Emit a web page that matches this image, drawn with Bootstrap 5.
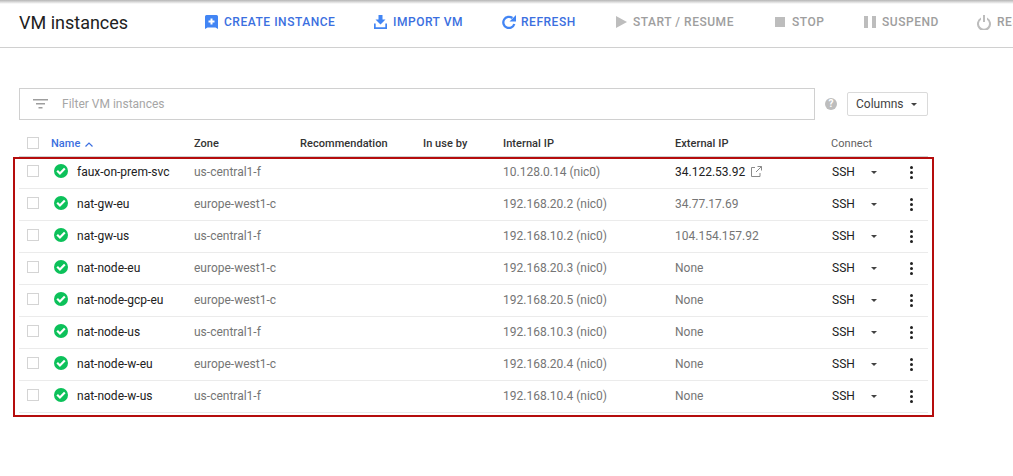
<!DOCTYPE html>
<html lang="en">
<head>
  <meta charset="UTF-8" />
  <title>VM instances</title>
  <link href="https://cdn.jsdelivr.net/npm/bootstrap@5.3.0/dist/css/bootstrap.min.css" rel="stylesheet"/>
  <style>
    html, body { height: 100%; overflow: hidden; }
    body { font-family: Roboto, "Liberation Sans", sans-serif; font-size: 12px; color: #212121; background: #fff; }

    .page-shadow { height: 4px; background: linear-gradient(#b5b5b5, #fff); }

    .vm-toolbar { height: 44px; width: 1013px; border-bottom: 1px solid #d0d0d0; white-space: nowrap; overflow: hidden; padding: 0 0 7px 19px; }
    .vm-title { font-size: 18px; width: 186px; flex: none; }
    .tool-item { font-size: 12px; font-weight: 500; letter-spacing: .53px; flex: none; text-transform: uppercase; color: #3b6fe0; gap: 6px; }
    .tool-item svg { flex: none; fill: #4285f4; }
    .tool-item.off { color: #9e9e9e; }
    .tool-item.off svg { fill: #bdbdbd; }
    .tool-create { width: 169px; }
    .tool-import { width: 128px; }
    .tool-refresh { width: 114px; gap: 5px; }
    .tool-start { width: 159px; }
    .tool-stop { width: 89px; }
    .tool-suspend { width: 113px; }

    .filter-row { padding: 40px 0 0 19px; }
    .filter-box { width: 796px; height: 32px; border: 1px solid #d0d0d0; padding-left: 13px; color: #a6a6a6; gap: 14px; }
    .help-dot { width: 12px; height: 12px; border-radius: 50%; background: #bdbdbd; color: #fff; font-size: 10px; font-weight: 700; line-height: 12px; text-align: center; margin-left: 10px; }
    .columns-btn { width: 81px; height: 24px; margin-left: 10px; border: 1px solid #dadada; border-radius: 2px; background: #fff; color: #424242; font-size: 12px; padding: 0 0 0 8px; gap: 7px; }

    .vm-wrap { width: 909px; margin: 11px 0 0 19px; position: relative; }
    .vm-table { table-layout: fixed; width: 909px; margin: 0; --bs-table-bg: transparent; font-size: 12px; }
    .vm-table th, .vm-table td { padding: 0; vertical-align: middle; white-space: nowrap; }
    .vm-table th { height: 25px; padding-top: 2px; font-weight: 500; font-size: 11px; color: #333; letter-spacing: .05px; border-bottom: 1px solid #d0d0d0; }
    .vm-table td { height: 32px; color: #757575; border-bottom: 1px solid #ebebeb; }
    .vm-table td.vm-name { color: #212121; }
    .vm-table th.sorted { color: #3b6fe0; }
    .vm-table th.muted-head { color: #616161; font-weight: 400; }
    .vm-table td.ext-live { color: #212121; }

    .fake-check { display: block; width: 12px; height: 12px; border: 1px solid #d4d4d4; margin: 0 0 2px 8px; }
    .name-cell { gap: 9px; margin-left: 3px; }
    .name-cell svg { margin-bottom: 2px; }
    .sort-arrow { margin-left: 2px; }
    .ext-link { margin: -3px 0 0 6px; vertical-align: middle; }
    .ssh-cell { color: #212121; padding: 0 33px 0 1px; width: 79px; }
    .caret-down { width: 0; height: 0; border-left: 3.5px solid transparent; border-right: 3.5px solid transparent; border-top: 3.5px solid #424242; }
    .kebab { width: 3px; gap: 2px; }
    .kebab i { display: block; width: 3px; height: 3px; border-radius: 50%; background: #212121; }

    .red-frame { position: absolute; left: -6px; top: 26px; width: 921px; height: 260px; border: 2px solid #b50d0d; pointer-events: none; }
  </style>
</head>
<body>
  <div class="page-shadow"></div>

  <div class="vm-toolbar d-flex align-items-center">
    <div class="vm-title">VM instances</div>
    <div class="tool-item tool-create d-flex align-items-center">
      <svg width="13" height="14" viewBox="0 0 13 14"><path fill-rule="evenodd" d="M1.500 0h10a1.500 1.500 0 0 1 1.500 1.500V14l-2.500-1.500h-8L0 14V1.500A1.500 1.500 0 0 1 1.500 0zM5.500 3.500v2h-2v2h2v2h2v-2h2v-2h-2v-2z"/></svg>
      <span>Create instance</span>
    </div>
    <div class="tool-item tool-import d-flex align-items-center">
      <svg width="13" height="14" viewBox="0 0 13 14"><path d="M4.500 0h4v4.500h3l-5 5-5-5h3zM0 8.500h1.700v3.700h9.600V8.500H13V14H0z"/></svg>
      <span>Import VM</span>
    </div>
    <div class="tool-item tool-refresh d-flex align-items-center">
      <svg width="14" height="14" viewBox="0 0 14 14"><path fill="none" stroke="#4285f4" stroke-width="2.300" d="M12.300 9A5.600 5.600 0 1 1 10.400 3"/><path d="M7.500 6.500H14V0z"/></svg>
      <span>Refresh</span>
    </div>
    <div class="tool-item tool-start off d-flex align-items-center">
      <svg width="11" height="12" viewBox="0 0 11 12"><path d="M0 0l11 6-11 6z"/></svg>
      <span>Start / Resume</span>
    </div>
    <div class="tool-item tool-stop off d-flex align-items-center">
      <svg width="11" height="10" viewBox="0 0 11 10"><path d="M0 0h10v10H0z"/></svg>
      <span>Stop</span>
    </div>
    <div class="tool-item tool-suspend off d-flex align-items-center">
      <svg width="12" height="12" viewBox="0 0 12 12"><path d="M0 0h4v12H0zM8 0h4v12H8z"/></svg>
      <span>Suspend</span>
    </div>
    <div class="tool-item off d-flex align-items-center">
      <svg width="14" height="15" viewBox="0 0 14 15"><path d="M6 0h2v7H6z"/><path d="M4 2.600v2.100a5 5 0 1 0 6 0V2.600a7 7 0 1 1-6 0z"/></svg>
      <span>Reset</span>
    </div>
  </div>

  <div class="filter-row d-flex align-items-center">
    <div class="filter-box d-flex align-items-center">
      <svg width="15" height="10" viewBox="0 0 15 10"><path fill="#9e9e9e" d="M0 0h15v1.500H0zM3 4h9v1.500H3zM5.500 8h4v1.500h-4z"/></svg>
      <span>Filter VM instances</span>
    </div>
    <div class="help-dot">?</div>
    <button type="button" class="columns-btn d-flex align-items-center">Columns <span class="caret-down"></span></button>
  </div>

  <div class="vm-wrap">
    <table class="table vm-table">
      <colgroup>
        <col style="width:32px"><col style="width:143px"><col style="width:106px"><col style="width:123px"><col style="width:80px"><col style="width:172px"><col style="width:156px"><col>
      </colgroup>
      <thead>
        <tr>
          <th><span class="fake-check"></span></th>
          <th class="sorted">Name <svg class="sort-arrow" width="8" height="5" viewBox="0 0 8 5"><path fill="none" stroke="#3b6fe0" stroke-width="1.200" d="M.5 4.500L4 1l3.500 3.500"/></svg></th>
          <th>Zone</th>
          <th>Recommendation</th>
          <th>In use by</th>
          <th>Internal IP</th>
          <th>External IP</th>
          <th class="muted-head">Connect</th>
        </tr>
      </thead>
      <tbody id="rows"></tbody>
    </table>
    <div class="red-frame"></div>
  </div>

  <script src="https://cdn.jsdelivr.net/npm/bootstrap@5.3.0/dist/js/bootstrap.bundle.min.js"></script>
  <script>
    const vms = [
      ['faux-on-prem-svc', 'us-central1-f', '10.128.0.14', '34.122.53.92'],
      ['nat-gw-eu', 'europe-west1-c', '192.168.20.2', '34.77.17.69'],
      ['nat-gw-us', 'us-central1-f', '192.168.10.2', '104.154.157.92'],
      ['nat-node-eu', 'europe-west1-c', '192.168.20.3', 'None'],
      ['nat-node-gcp-eu', 'europe-west1-c', '192.168.20.5', 'None'],
      ['nat-node-us', 'us-central1-f', '192.168.10.3', 'None'],
      ['nat-node-w-eu', 'europe-west1-c', '192.168.20.4', 'None'],
      ['nat-node-w-us', 'us-central1-f', '192.168.10.4', 'None']
    ];
    const okIcon = '<svg width="14" height="14" viewBox="0 0 14 14"><circle cx="7" cy="7" r="7" fill="#0cc15a"/><path fill="none" stroke="#fff" stroke-width="2.200" d="M3.200 6.800l2.700 2.700 4.900-5"/></svg>';
    const linkIcon = '<svg class="ext-link" width="11" height="11" viewBox="0 0 11 11"><path fill="none" stroke="#8a8a8a" d="M4 1.500H.5v9h8.500V7M6.500.5h4V4.500M10.500.5L5 6"/></svg>';

    document.getElementById('rows').innerHTML = vms.map((vm, i) => `
      <tr>
        <td><span class="fake-check"></span></td>
        <td class="vm-name"><div class="name-cell d-flex align-items-center">${okIcon}<span>${vm[0]}</span></div></td>
        <td>${vm[1]}</td>
        <td></td>
        <td></td>
        <td>${vm[2]} (nic0)</td>
        <td class="${i === 0 ? 'ext-live' : ''}">${vm[3]}${i === 0 ? linkIcon : ''}</td>
        <td><div class="d-flex align-items-center"><div class="ssh-cell d-flex align-items-center justify-content-between"><span>SSH</span><span class="caret-down"></span></div><div class="kebab d-flex flex-column"><i></i><i></i><i></i></div></div></td>
      </tr>`).join('');
  </script>
</body>
</html>
